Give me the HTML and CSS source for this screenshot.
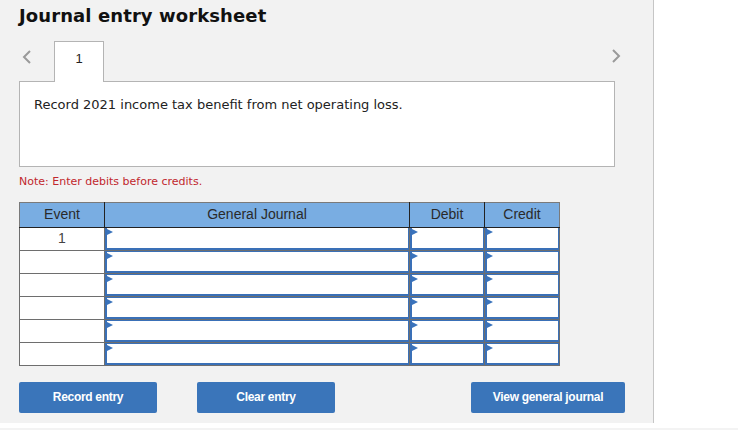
FILE: index.html
```html
<!DOCTYPE html>
<html>
<head>
<meta charset="utf-8">
<link rel="stylesheet" href="styles.css">
</head>
<body>
<div class="panel">
  <h1 class="title">Journal entry worksheet</h1>
  <div class="tabs">
    <svg class="chev chev-left" width="10" height="16" viewBox="0 0 10 16"><polyline points="8,2 2,8 8,14" fill="none" stroke="#9a9a9a" stroke-width="2"/></svg>
    <div class="tab">1</div>
    <svg class="chev chev-right" width="10" height="16" viewBox="0 0 10 16"><polyline points="2,2 8,8 2,14" fill="none" stroke="#9a9a9a" stroke-width="2"/></svg>
  </div>
  <div class="box">Record 2021 income tax benefit from net operating loss.</div>
  <p class="note">Note: Enter debits before credits.</p>
  <table class="journal">
    <colgroup>
      <col class="c-event"><col class="c-gj"><col class="c-amt"><col class="c-amt">
    </colgroup>
    <thead>
      <tr><th>Event</th><th>General Journal</th><th>Debit</th><th>Credit</th></tr>
    </thead>
    <tbody>
      <tr><td class="ev">1</td><td class="in"><div class="field"></div></td><td class="in"><div class="field"></div></td><td class="in"><div class="field"></div></td></tr>
      <tr><td class="ev"></td><td class="in"><div class="field"></div></td><td class="in"><div class="field"></div></td><td class="in"><div class="field"></div></td></tr>
      <tr><td class="ev"></td><td class="in"><div class="field"></div></td><td class="in"><div class="field"></div></td><td class="in"><div class="field"></div></td></tr>
      <tr><td class="ev"></td><td class="in"><div class="field"></div></td><td class="in"><div class="field"></div></td><td class="in"><div class="field"></div></td></tr>
      <tr><td class="ev"></td><td class="in"><div class="field"></div></td><td class="in"><div class="field"></div></td><td class="in"><div class="field"></div></td></tr>
      <tr><td class="ev"></td><td class="in"><div class="field"></div></td><td class="in"><div class="field"></div></td><td class="in"><div class="field"></div></td></tr>
    </tbody>
  </table>
  <div class="actions">
    <button class="btn btn-record">Record entry</button>
    <button class="btn btn-clear">Clear entry</button>
    <button class="btn btn-view">View general journal</button>
  </div>
</div>
<div class="footline"></div>
</body>
</html>
```
FILE: styles.css
```css
* { box-sizing: border-box; }
html, body { margin: 0; padding: 0; background: #fff; }
body { font-family: "DejaVu Sans", Verdana, sans-serif; }

.panel {
  width: 654px;
  height: 423px;
  background: #f2f2f2;
  border-right: 1px solid #c6c6c6;
  padding: 0 0 0 19px;
}

.title {
  margin: 0;
  height: 30px;
  padding-top: 5px;
  font-size: 18px;
  line-height: 22px;
  font-weight: bold;
  letter-spacing: 0.1px;
  color: #111;
}

.tabs {
  width: 602px;
  height: 51px;
  display: flex;
  align-items: flex-end;
  position: relative;
  z-index: 1;
}
.chev { display: block; }
.chev-left { margin: 0 0 16px 3px; }
.chev-right { margin: 0 0 17px auto; }
.tab {
  width: 50px;
  height: 41px;
  margin-left: 22px;
  margin-bottom: -1px;
  background: #fff;
  border: 1px solid #b4b4b4;
  border-bottom: none;
  text-align: center;
  font-family: "Liberation Sans", Arial, sans-serif;
  font-size: 13px;
  color: #222;
  padding-top: 9px;
}

.box {
  width: 596px;
  height: 86px;
  background: #fff;
  border: 1px solid #b4b4b4;
  padding: 15px 0 0 14px;
  font-size: 13px;
  line-height: 16px;
  color: #222;
}

.note {
  margin: 8px 0 0 0;
  font-size: 11px;
  line-height: 14px;
  color: #c1272d;
}

.journal {
  margin-top: 13px;
  border-collapse: collapse;
  width: 541px;
  table-layout: fixed;
  font-family: "Liberation Sans", Arial, sans-serif;
}
.c-event { width: 85px; }
.c-gj { width: 305px; }
.c-amt { width: 75px; }
.journal th {
  height: 25px;
  background: #79ade2;
  color: #2a2a2a;
  font-weight: normal;
  font-size: 14px;
  padding: 0 0 2px 0;
  border: 1px solid #222;
  border-top: 1px solid #7a7a7a;
}
.journal th:first-child { border-left: 1px solid #7a7a7a; }
.journal th:last-child { border-right: 1px solid #7a7a7a; }
.journal td {
  height: 23px;
  padding: 0;
  border: 1px solid #6e6e6e;
  background: #fff;
}
.journal tbody tr:first-child td { border-top: 1px solid #222; }
.journal td.ev {
  text-align: center;
  font-size: 14px;
  color: #444;
  vertical-align: top;
  padding-top: 2px;
}
.field {
  position: relative;
  height: 22px;
  border: 1px solid #3a70b7;
  border-left: 2px solid #3a70b7;
  border-bottom: 2px solid #3a70b7;
  background: #fff;
}
.journal tbody tr:first-child .field { border-top: none; }
.field::before {
  content: "";
  position: absolute;
  left: 0;
  top: 1px;
  width: 0;
  height: 0;
  border-top: 3px solid transparent;
  border-bottom: 3px solid transparent;
  border-left: 6px solid #3a73bc;
}

.actions {
  display: flex;
  width: 606px;
  margin-top: 16px;
  gap: 40px;
}
.btn {
  height: 31px;
  border: none;
  border-radius: 2px;
  background: #3a75ba;
  color: #fff;
  font-family: "Liberation Sans", Arial, sans-serif;
  font-weight: bold;
  font-size: 12px;
  letter-spacing: -0.3px;
  padding: 0 0 2px 0;
}
.btn-record, .btn-clear { width: 138px; }
.btn-view { width: 154px; margin-left: auto; }

.footline {
  margin-top: 5px;
  height: 2px;
  background: #f3f3f3;
}
```
